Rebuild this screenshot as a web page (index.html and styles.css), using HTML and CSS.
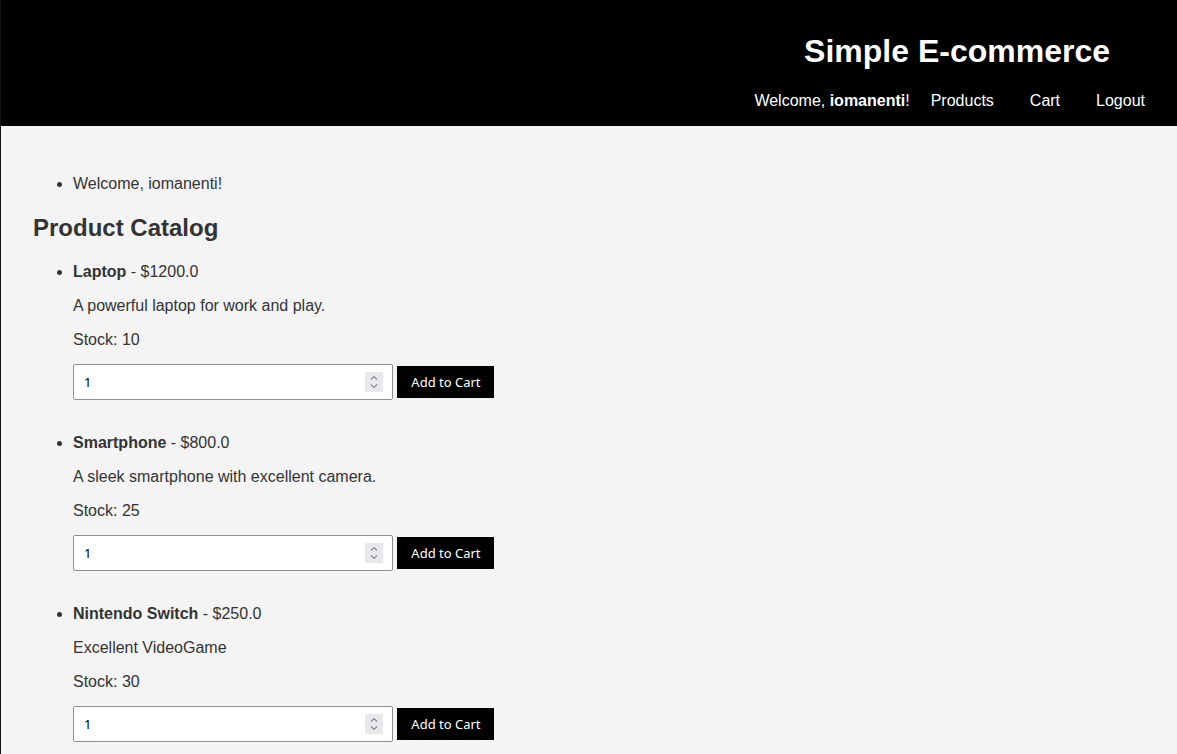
FILE: index.html
```html
<!DOCTYPE html>
<html>
<head>
<meta charset="utf-8">
<title>Simple E-commerce</title>
<link rel="stylesheet" href="styles.css">
</head>
<body>
<header class="site-header">
  <h1 class="site-title">Simple E-commerce</h1>
  <nav class="site-nav">
    <span class="welcome">Welcome, <strong>iomanenti</strong>!</span>
    <a href="#">Products</a>
    <a href="#">Cart</a>
    <a href="#">Logout</a>
  </nav>
</header>
<main class="content">
  <ul class="messages">
    <li>Welcome, iomanenti!</li>
  </ul>
  <h2 class="page-title">Product Catalog</h2>
  <ul class="products">
    <li class="product">
      <p><strong>Laptop</strong> - $1200.0</p>
      <p>A powerful laptop for work and play.</p>
      <p>Stock: 10</p>
      <form class="add-form">
        <span class="qty-wrap"><input class="qty" type="number" value="1" min="1"><span class="spin"><svg viewBox="0 0 18 20" width="18" height="20"><path d="M6 7.5 9 4.5 12 7.5M6 12.5 9 15.5 12 12.5" fill="none" stroke="#8a8a8a" stroke-width="1.2"/></svg></span></span> <button class="add-btn" type="button">Add to Cart</button>
      </form>
    </li>
    <li class="product">
      <p><strong>Smartphone</strong> - $800.0</p>
      <p>A sleek smartphone with excellent camera.</p>
      <p>Stock: 25</p>
      <form class="add-form">
        <span class="qty-wrap"><input class="qty" type="number" value="1" min="1"><span class="spin"><svg viewBox="0 0 18 20" width="18" height="20"><path d="M6 7.5 9 4.5 12 7.5M6 12.5 9 15.5 12 12.5" fill="none" stroke="#8a8a8a" stroke-width="1.2"/></svg></span></span> <button class="add-btn" type="button">Add to Cart</button>
      </form>
    </li>
    <li class="product">
      <p><strong>Nintendo Switch</strong> - $250.0</p>
      <p>Excellent VideoGame</p>
      <p>Stock: 30</p>
      <form class="add-form">
        <span class="qty-wrap"><input class="qty" type="number" value="1" min="1"><span class="spin"><svg viewBox="0 0 18 20" width="18" height="20"><path d="M6 7.5 9 4.5 12 7.5M6 12.5 9 15.5 12 12.5" fill="none" stroke="#8a8a8a" stroke-width="1.2"/></svg></span></span> <button class="add-btn" type="button">Add to Cart</button>
      </form>
    </li>
  </ul>
</main>
</body>
</html>
```
FILE: styles.css
```css
html, body {
  margin: 0;
  padding: 0;
}
body {
  font-family: "Liberation Sans", Arial, sans-serif;
  font-size: 16px;
  color: #333;
  background: #f4f4f4;
  border-left: 1px solid #111;
  min-height: 100vh;
  box-sizing: border-box;
}
.site-header {
  background: #000;
  color: #fff;
  display: flex;
  flex-direction: column;
  align-items: flex-end;
  padding: 12px 14px 15px 20px;
  margin-left: -1px;
  height: 126px;
  box-sizing: border-box;
}
.site-title {
  font-size: 32px;
  font-weight: bold;
  margin: 21px 53px 22px 0;
  line-height: 37px;
}
.site-nav {
  display: flex;
  align-items: center;
  line-height: 18px;
}
.site-nav .welcome {
  margin-right: 3px;
}
.site-nav a {
  color: #fff;
  text-decoration: none;
  padding: 0 18px;
}
.content {
  padding: 33px 32px 20px 32px;
}
.messages {
  margin: 16px 0;
  padding-left: 40px;
}
.page-title {
  font-size: 24px;
  margin: 20px 0 21px;
  line-height: 29px;
}
.products {
  margin: 16px 0;
  padding-left: 40px;
}
.product {
  padding-bottom: 18px;
}
.product p {
  margin: 16px 0;
  line-height: 18px;
}
.product p:nth-of-type(3) {
  margin-bottom: 15px;
}
.add-form {
  margin: 0;
}
.qty-wrap {
  position: relative;
  display: inline-block;
  vertical-align: middle;
}
.qty {
  display: block;
  width: 320px;
  height: 36px;
  box-sizing: border-box;
  padding: 8px 10px;
  border: 1px solid #8f8f8f;
  border-radius: 2px;
  background: #fff;
  font-family: "Noto Sans", "DejaVu Sans", sans-serif;
  font-size: 13px;
  color: #000;
  -moz-appearance: textfield;
}
.qty::-webkit-inner-spin-button,
.qty::-webkit-outer-spin-button {
  -webkit-appearance: none;
  margin: 0;
}
.spin {
  position: absolute;
  right: 10px;
  top: 8px;
  width: 18px;
  height: 20px;
  background: #e9e9ed;
  display: block;
}
.spin svg {
  display: block;
}
.add-btn {
  height: 32px;
  width: 97px;
  background: #000;
  color: #fff;
  border: none;
  border-radius: 0;
  font-family: "Noto Sans", "DejaVu Sans", sans-serif;
  font-size: 13px;
  padding: 0;
  vertical-align: middle;
  cursor: pointer;
}
```
